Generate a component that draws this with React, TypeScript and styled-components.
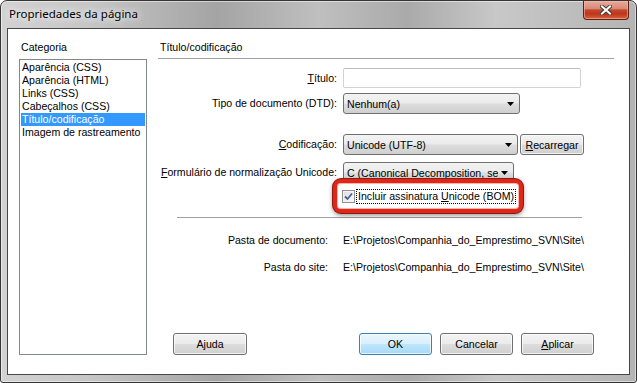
import React from 'react'
import styled, { createGlobalStyle } from 'styled-components'

const categories = [
  'Aparência (CSS)',
  'Aparência (HTML)',
  'Links (CSS)',
  'Cabeçalhos (CSS)',
  'Título/codificação',
  'Imagem de rastreamento'
]

const sitePath = 'E:\\Projetos\\Companhia_do_Emprestimo_SVN\\Site\\'

const GlobalStyle = createGlobalStyle`
  html, body {
    margin: 0;
    padding: 0;
    background: #ffffff;
  }
  body {
    font-family: 'Liberation Sans', Arial, sans-serif;
    font-size: 10.6px;
    color: #000;
  }
`

const CloseIcon: React.FC = () => (
  <svg width="12" height="10" viewBox="0 0 12 10">
    <g strokeLinecap="square">
      <line x1="2" y1="1.5" x2="10" y2="8.5" stroke="#3d3d3d" strokeWidth="4" />
      <line x1="10" y1="1.5" x2="2" y2="8.5" stroke="#3d3d3d" strokeWidth="4" />
      <line x1="2" y1="1.5" x2="10" y2="8.5" stroke="#ffffff" strokeWidth="2" />
      <line x1="10" y1="1.5" x2="2" y2="8.5" stroke="#ffffff" strokeWidth="2" />
    </g>
  </svg>
)

const ArrowIcon: React.FC = () => (
  <svg width="7" height="4" viewBox="0 0 7 4">
    <path d="M0 0 H7 L3.5 4 Z" fill="#000" />
  </svg>
)

const CheckIcon: React.FC = () => (
  <svg width="9" height="9" viewBox="0 0 9 9">
    <path d="M1 4.5 L3.5 7 L8 1.5" fill="none" stroke="#4a5f97" strokeWidth="1.8" />
  </svg>
)

const App: React.FC = () => {
  const selected = 4

  return (
    <>
      <GlobalStyle />
      <Window>
        <TitleBar>
          <Title>Propriedades da página</Title>
          <CloseButton>
            <CloseIcon />
          </CloseButton>
        </TitleBar>

        <Client>
          <CategoryColumn>
            <SectionTitle>Categoria</SectionTitle>
            <ListBox>
              {categories.map((c, i) => (
                <ListItem key={c} $selected={i === selected}>
                  {c}
                </ListItem>
              ))}
            </ListBox>
          </CategoryColumn>

          <Panel>
            <SectionTitle>Título/codificação</SectionTitle>
            <Rule />

            <Row $top={9} $h={20}>
              <Label>
                <Mnemonic>T</Mnemonic>ítulo:
              </Label>
              <TextInput />
            </Row>

            <Row $top={5} $h={21}>
              <Label>Tipo de documento (DTD):</Label>
              <ComboBox $w={177}>
                <span>Nenhum(a)</span>
                <ArrowIcon />
              </ComboBox>
            </Row>

            <Row $top={20} $h={21}>
              <Label>
                <Mnemonic>C</Mnemonic>odificação:
              </Label>
              <ComboBox $w={175}>
                <span>Unicode (UTF-8)</span>
                <ArrowIcon />
              </ComboBox>
              <Button $w={64} $ml={-4}>
                <Mnemonic>R</Mnemonic>ecarregar
              </Button>
            </Row>

            <Row $top={7} $h={21}>
              <Label>
                <Mnemonic>F</Mnemonic>ormulário de normalização Unicode:
              </Label>
              <ComboBox $w={171}>
                <span>C (Canonical Decomposition, se</span>
                <ArrowIcon />
              </ComboBox>
            </Row>

            <Highlight>
              <CheckBox>
                <CheckIcon />
              </CheckBox>
              <FocusLabel>
                Incluir assinatura <Mnemonic>U</Mnemonic>nicode (BOM)
              </FocusLabel>
            </Highlight>

            <Separator />

            <Row $top={16} $h={13}>
              <Label $inset={9}>Pasta de documento:</Label>
              <Value>{sitePath}</Value>
            </Row>

            <Row $top={14} $h={13}>
              <Label $inset={9}>Pasta do site:</Label>
              <Value>{sitePath}</Value>
            </Row>

            <Footer>
              <Button $w={74}>
                A<Mnemonic>j</Mnemonic>uda
              </Button>
              <ButtonGroup>
                <Button $w={73} $default>
                  OK
                </Button>
                <Button $w={73}>Cancelar</Button>
                <Button $w={73}>
                  <Mnemonic>A</Mnemonic>plicar
                </Button>
              </ButtonGroup>
            </Footer>
          </Panel>
        </Client>
      </Window>
    </>
  )
}

const Window = styled.div`
  box-sizing: border-box;
  width: 637px;
  height: 383px;
  display: flex;
  flex-direction: column;
  padding: 0 6px 7px;
  border: 1px solid #353535;
  border-radius: 7px 7px 3px 3px;
  background: linear-gradient(
    90deg,
    #d2d2d2 0%,
    #c6c6c6 14%,
    #a4a4a4 34%,
    #bfbfbf 50%,
    #aaaaaa 64%,
    #c8c8c8 78%,
    #b4b4b4 100%
  );
  box-shadow: inset 0 0 0 1px rgba(255, 255, 255, 0.5);
  overflow: hidden;
`

const TitleBar = styled.div`
  height: 27px;
  flex-shrink: 0;
  display: flex;
  align-items: flex-start;
  justify-content: space-between;
`

const Title = styled.div`
  margin: 5px 0 0 2px;
  font-family: 'Segoe UI', 'Noto Sans', sans-serif;
  font-size: 11.5px;
  line-height: 16px;
  color: #000;
  text-shadow: 0 0 6px #fff, 0 0 10px rgba(255, 255, 255, 0.8);
`

const CloseButton = styled.div`
  box-sizing: border-box;
  width: 46px;
  height: 19px;
  margin-right: 1px;
  display: flex;
  align-items: center;
  justify-content: center;
  border: 1px solid #5b2016;
  border-top: none;
  border-radius: 0 0 4px 4px;
  background: linear-gradient(180deg, #e8ab9c 0%, #d98a77 42%, #c4472c 50%, #be361b 72%, #d8653f 100%);
  box-shadow: inset 0 0 0 1px rgba(255, 190, 175, 0.55);
`

const Client = styled.div`
  flex: 1;
  min-height: 0;
  display: flex;
  gap: 11px;
  padding: 12px 15px 19px 11px;
  border: 1px solid #474747;
  background: #ffffff;
`

const CategoryColumn = styled.div`
  width: 128px;
  flex-shrink: 0;
  display: flex;
  flex-direction: column;
`

const SectionTitle = styled.div`
  height: 13px;
  line-height: 13px;
  padding-left: 2px;
  margin-bottom: 5px;
  white-space: nowrap;
`

const ListBox = styled.div`
  flex: 1;
  padding: 1px;
  border: 1px solid #828790;
  background: #fff;
`

const ListItem = styled.div<{ $selected: boolean }>`
  height: 13px;
  line-height: 13px;
  padding-left: 1px;
  white-space: nowrap;
  background-color: ${(props) => (props.$selected ? '#3399ff' : 'transparent')};
  color: ${(props) => (props.$selected ? '#ffffff' : '#000000')};
`

const Panel = styled.div`
  flex: 1;
  min-width: 0;
  display: flex;
  flex-direction: column;
`

const Rule = styled.div`
  height: 1px;
  margin-top: -1px;
  background: #a0a0a0;
`

const Row = styled.div<{ $top: number; $h: number }>`
  display: flex;
  align-items: center;
  gap: 6px;
  margin-top: ${(props) => props.$top}px;
  height: ${(props) => props.$h}px;
  flex-shrink: 0;
`

const Label = styled.div<{ $inset?: number }>`
  box-sizing: border-box;
  width: 179px;
  flex-shrink: 0;
  padding-right: ${(props) => props.$inset ?? 0}px;
  text-align: right;
  white-space: nowrap;
  line-height: 13px;
`

const Mnemonic = styled.span`
  text-decoration: underline;
`

const TextInput = styled.div`
  box-sizing: border-box;
  width: 238px;
  height: 20px;
  border: 1px solid #d2d2d2;
  border-top-color: #bdbdbd;
  border-radius: 2px;
  background: #fff;
`

const ComboBox = styled.div<{ $w: number }>`
  box-sizing: border-box;
  width: ${(props) => props.$w}px;
  height: 21px;
  display: flex;
  align-items: center;
  justify-content: space-between;
  padding: 0 5px 0 3px;
  border: 1px solid #707070;
  border-radius: 3px;
  background: linear-gradient(180deg, #f3f3f3 0%, #ebebeb 48%, #dddddd 52%, #d0d0d0 100%);
  white-space: nowrap;
  overflow: hidden;

  span {
    overflow: hidden;
  }
`

const Button = styled.div<{ $w: number; $default?: boolean; $ml?: number }>`
  box-sizing: border-box;
  width: ${(props) => props.$w}px;
  height: ${(props) => (props.$ml !== undefined ? 21 : 22)}px;
  margin-left: ${(props) => props.$ml ?? 0}px;
  display: flex;
  align-items: center;
  justify-content: center;
  border: 1px solid ${(props) => (props.$default ? '#3c7fb1' : '#707070')};
  border-radius: 3px;
  background: ${(props) =>
    props.$default
      ? 'linear-gradient(180deg, #eaf6fd 0%, #d9f0fc 48%, #bee6fd 52%, #a7d9f5 100%)'
      : 'linear-gradient(180deg, #f3f3f3 0%, #ebebeb 48%, #dddddd 52%, #cfcfcf 100%)'};
  box-shadow: inset 0 0 0 1px rgba(255, 255, 255, 0.7);
  white-space: nowrap;
`

const Highlight = styled.div`
  position: relative;
  box-sizing: border-box;
  width: 190px;
  height: 34px;
  margin: -4px 0 0 175px;
  flex-shrink: 0;
  display: flex;
  align-items: center;
  gap: 1px;
  padding-left: 5px;
  border: 4px solid #de2619;
  border-radius: 8px;
  background: #ffffff;
  box-shadow: 0 0 0 1px #8e1a12, 0 2px 5px rgba(0, 0, 0, 0.5), inset 0 0 0 1px rgba(255, 150, 130, 0.7);
`

const CheckBox = styled.div`
  box-sizing: border-box;
  width: 13px;
  height: 13px;
  flex-shrink: 0;
  display: flex;
  align-items: center;
  justify-content: center;
  border: 1px solid #8f8f8f;
  background: linear-gradient(135deg, #dcdcdc 0%, #f0f0f0 60%, #fbfbfb 100%);
  box-shadow: inset 0 0 0 1px #f4f4f4;
`

const FocusLabel = styled.div`
  line-height: 13px;
  padding: 0 1px;
  border: 1px dotted #000;
  white-space: nowrap;
`

const Separator = styled.div`
  height: 1px;
  flex-shrink: 0;
  margin: 4px 32px 0 19px;
  background: #a0a0a0;
`

const Value = styled.div`
  line-height: 13px;
  white-space: nowrap;
`

const Footer = styled.div`
  margin-top: auto;
  display: flex;
  align-items: center;
  justify-content: space-between;
  padding: 0 20px 0 15px;
`

const ButtonGroup = styled.div`
  display: flex;
  gap: 8px;
`

export default App
